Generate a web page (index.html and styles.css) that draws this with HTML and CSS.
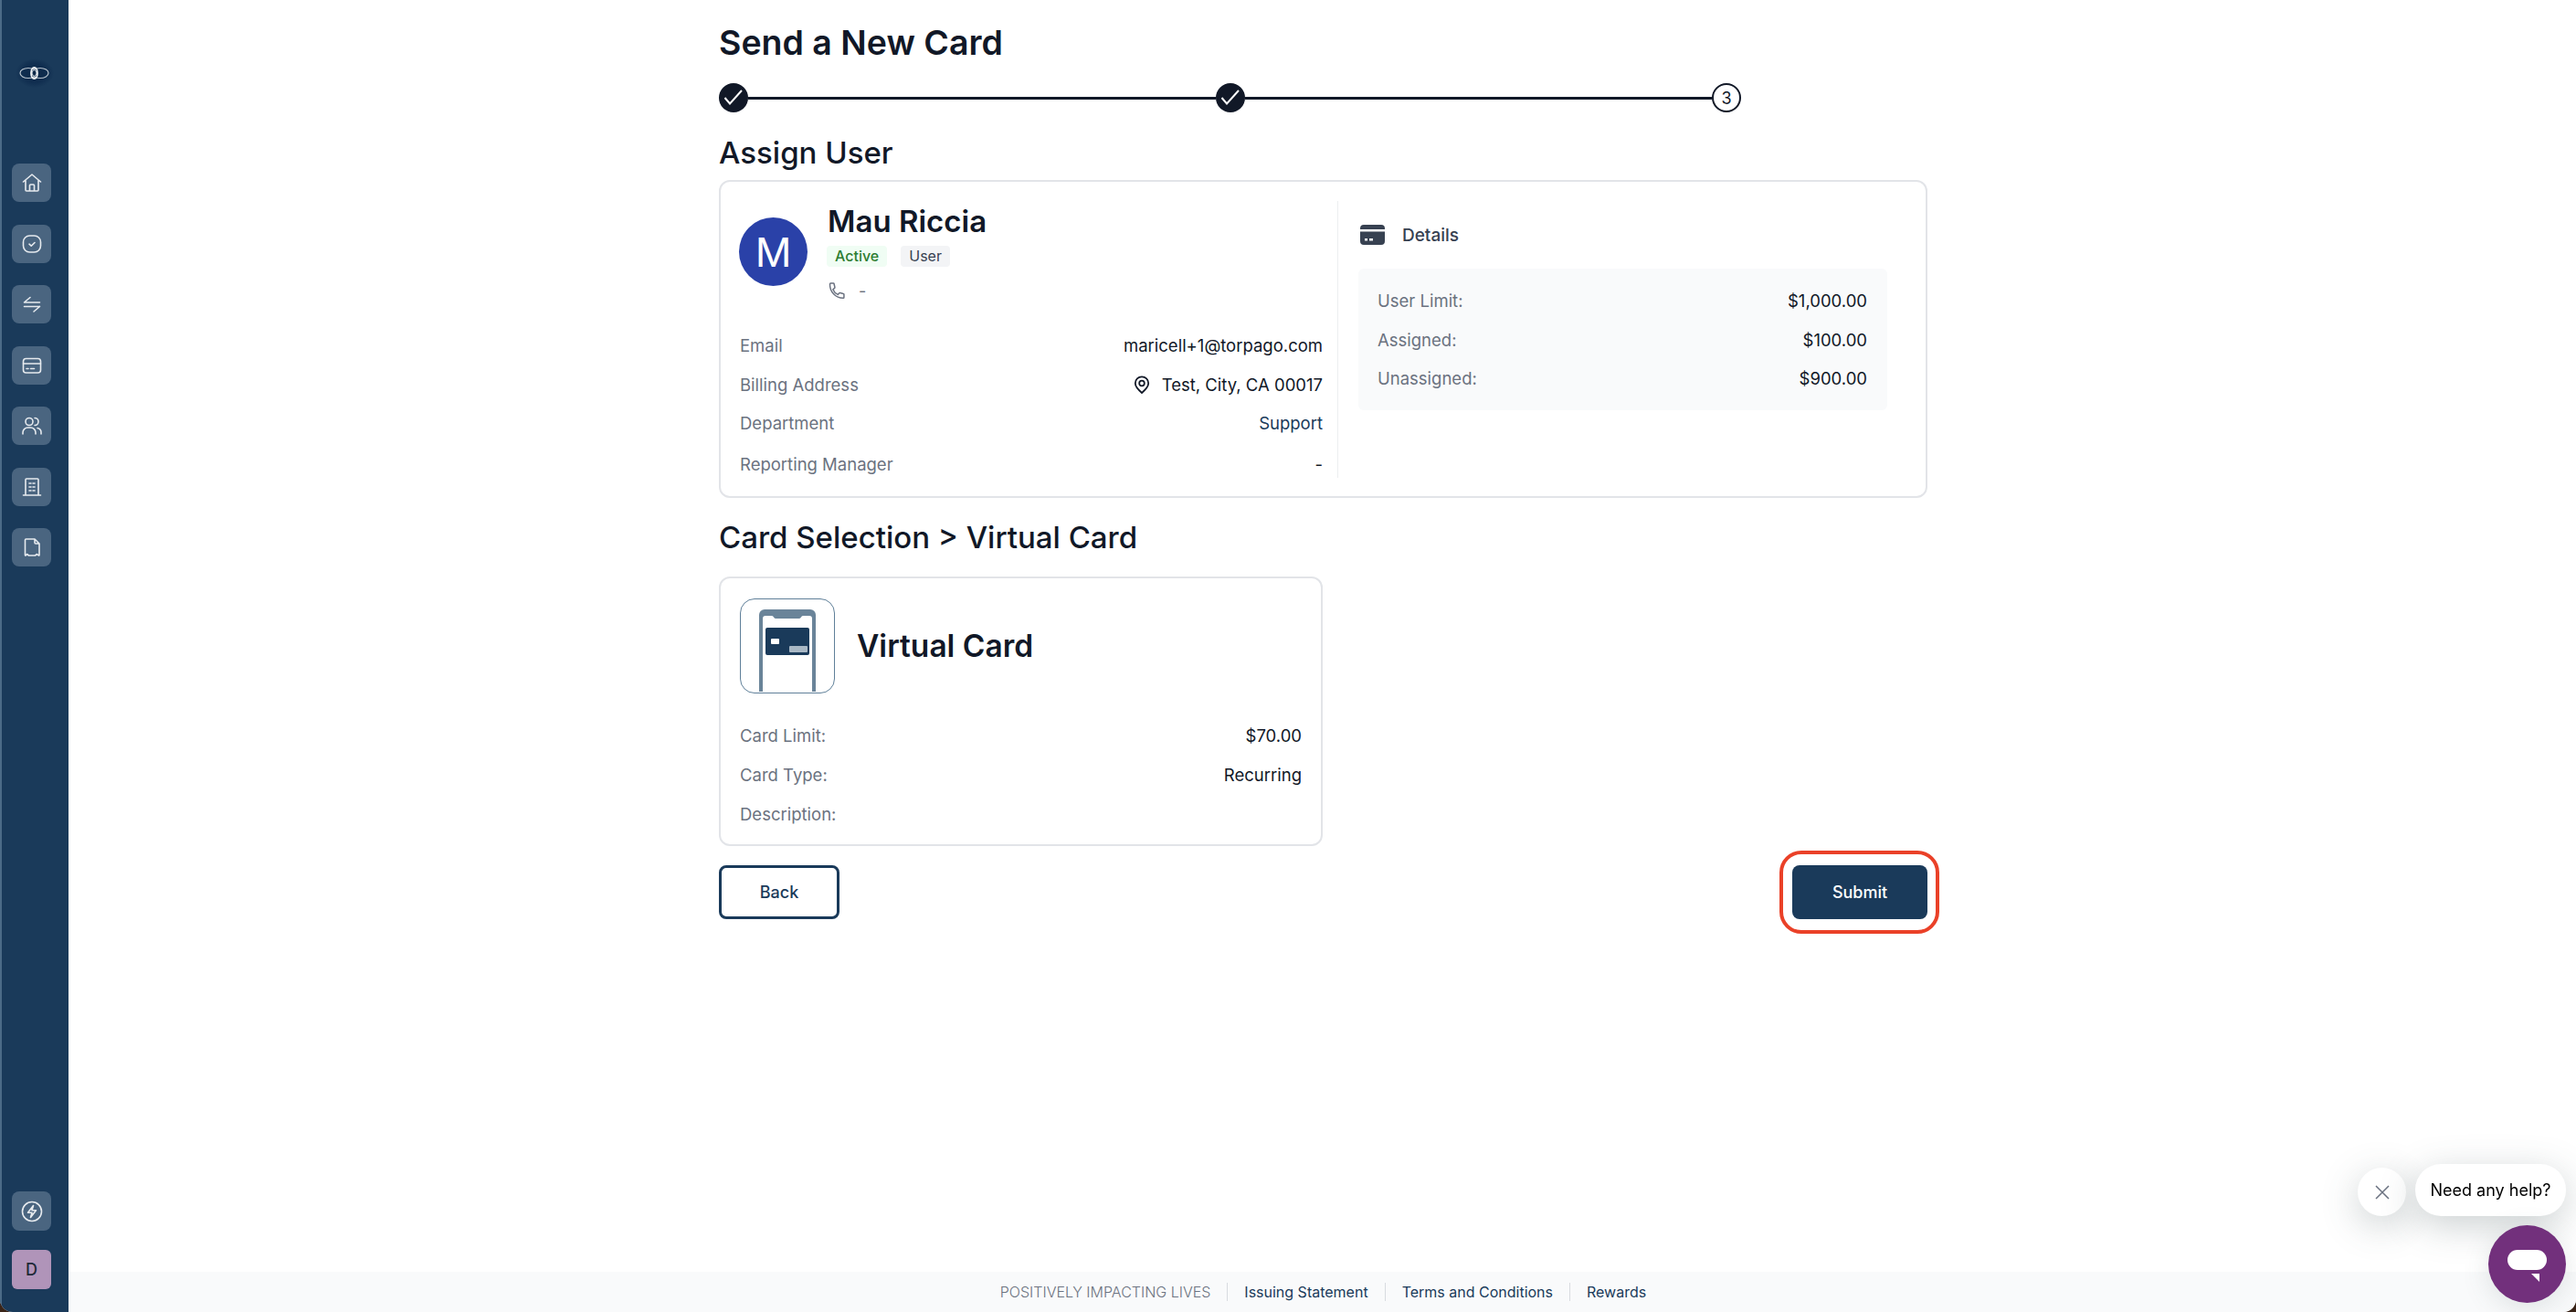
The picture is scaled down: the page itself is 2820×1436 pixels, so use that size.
FILE: index.html
```html
<!DOCTYPE html>
<html lang="en">
<head>
    <meta charset="UTF-8">
    <meta name="viewport" content="width=device-width, initial-scale=1.0">
    <title>Send a New Card</title>
    <link rel="stylesheet" href="styles.css">
</head>
<body>
    <div class="app">
        <aside class="sidebar">
            <svg class="logo" width="44" height="36" viewBox="0 0 44 36">
                <defs>
                    <radialGradient id="logoGlow">
                        <stop offset="0" stop-color="#0c2747"/>
                        <stop offset="0.65" stop-color="#102e50"/>
                        <stop offset="1" stop-color="#1a3a5a"/>
                    </radialGradient>
                </defs>
                <ellipse cx="22" cy="18" rx="21" ry="16" fill="url(#logoGlow)"/>
                <ellipse cx="15" cy="18" rx="9" ry="5.500" fill="none" stroke="#b8c3cd" stroke-width="1.200"/>
                <ellipse cx="28" cy="18" rx="9" ry="5.500" fill="none" stroke="#b8c3cd" stroke-width="1.200"/>
                <ellipse cx="21.500" cy="18" rx="3.500" ry="6" fill="none" stroke="#eef1f3" stroke-width="1.800"/>
            </svg>

            <nav class="nav">
                <a class="nav-item"><svg class="nav-icon" viewBox="0 0 24 24"><path d="M2.500 11 12 3l9.500 8M5 9.500V20a1 1 0 0 0 1 1h12a1 1 0 0 0 1-1V9.500M9.500 21v-6a1 1 0 0 1 1-1h3a1 1 0 0 1 1 1v6"/></svg></a>
                <a class="nav-item"><svg class="nav-icon" viewBox="0 0 24 24"><rect x="2.500" y="3" width="19" height="18" rx="7"/><path d="M9 12.200l2.200 2 3.800-3.700"/></svg></a>
                <a class="nav-item"><svg class="nav-icon" viewBox="0 0 24 24"><path d="M3.500 10h17M3.500 10l6.500-5.500M20.500 14.500h-17M20.500 14.500 14 20"/></svg></a>
                <a class="nav-item"><svg class="nav-icon" viewBox="0 0 24 24"><rect x="2.500" y="4.500" width="19" height="15.500" rx="3"/><path d="M2.500 10h19M6 15.500h2M10.500 15.500h4"/></svg></a>
                <a class="nav-item"><svg class="nav-icon" viewBox="0 0 24 24"><circle cx="9" cy="7.500" r="4"/><path d="M2 21v-1.500a5.500 5.500 0 0 1 5.500-5.500h3a5.500 5.500 0 0 1 5.500 5.500V21M15 3.500a4 4 0 0 1 0 8M18 14.500a5 5 0 0 1 4 5V21"/></svg></a>
                <a class="nav-item"><svg class="nav-icon" viewBox="0 0 24 24"><path d="M2.500 21h19M5 21V4a1 1 0 0 1 1-1h12a1 1 0 0 1 1 1v17M9 8h2M13 8h2M9 12h2M13 12h2M9 16h2M13 16h2"/></svg></a>
                <a class="nav-item"><svg class="nav-icon" viewBox="0 0 24 24"><path d="M4.500 4a1 1 0 0 1 1-1H15l5 5v12.500a.5.5 0 0 1-.8.4L17.500 19.500l-2 1.500h-7l-2-1.500-1.200 1.400a.5.5 0 0 1-.8-.4zM15 3v4a1 1 0 0 0 1 1h4"/></svg></a>
            </nav>

            <div class="side-bottom">
                <a class="nav-item nav-bolt"><svg class="nav-icon" viewBox="0 0 24 24"><circle cx="12" cy="12" r="10.500"/><path d="M13.500 5.500 7.500 13.200H12l-1.500 5.300 6-7.700H12z"/></svg></a>
                <div class="user-tile">D</div>
            </div>
        </aside>

        <div class="main">
            <main class="content">
                <h1>Send a New Card</h1>

                <div class="stepper">
                    <span class="step step-done"><svg width="32" height="32" viewBox="0 0 32 32"><path d="M6.500 16l5.500 6.500L25 8"/></svg></span>
                    <span class="step-line"></span>
                    <span class="step step-done"><svg width="32" height="32" viewBox="0 0 32 32"><path d="M6.500 16l5.500 6.500L25 8"/></svg></span>
                    <span class="step-line"></span>
                    <span class="step step-current">3</span>
                </div>

                <h2 class="section-title">Assign User</h2>
                <section class="card user-card">
                    <div class="user-col">
                        <div class="user-head">
                            <div class="avatar">M</div>
                            <div class="user-meta">
                                <div class="user-name">Mau Riccia</div>
                                <div class="badges">
                                    <span class="badge badge-green">Active</span>
                                    <span class="badge badge-gray">User</span>
                                </div>
                                <div class="phone">
                                    <svg width="20" height="20" viewBox="0 0 24 24" fill="none" stroke="#6b7280" stroke-width="1.800" stroke-linecap="round" stroke-linejoin="round"><path d="M4 2.500h3.500a1 1 0 0 1 1 .8l1 4.500a1 1 0 0 1-.4 1L7 10.500c1.200 3 3.500 5.500 6.500 6.800l1.800-2a1 1 0 0 1 1-.3l4.400 1.200a1 1 0 0 1 .8 1V21a1 1 0 0 1-1 1C10.500 22 2.800 13.500 3 3.500a1 1 0 0 1 1-1z"/></svg>
                                    <span>-</span>
                                </div>
                            </div>
                        </div>
                        <div class="row row-first"><span class="label">Email</span><span class="value">maricell+1@torpago.com</span></div>
                        <div class="row"><span class="label">Billing Address</span><span class="value value-addr"><svg width="18" height="20" viewBox="0 0 18 20" fill="none" stroke="#111827" stroke-width="1.800"><path d="M9 19C5 15.500 1.800 12.500 1.800 8.500a7.200 7.200 0 0 1 14.400 0C16.200 12.500 13 15.500 9 19z"/><circle cx="9" cy="8.500" r="2.800"/></svg>Test, City, CA 00017</span></div>
                        <div class="row"><span class="label">Department</span><span class="value value-link">Support</span></div>
                        <div class="row row-last"><span class="label">Reporting Manager</span><span class="value">-</span></div>
                    </div>

                    <div class="details-col">
                        <div class="details-head">
                            <svg width="27" height="22" viewBox="0 0 27 22"><path fill="#374151" d="M4 0h19a4 4 0 0 1 4 4v1H0V4a4 4 0 0 1 4-4zM0 7.500h27V18a4 4 0 0 1-4 4H4a4 4 0 0 1-4-4z"/><rect x="5" y="15" width="3" height="2.500" fill="#fff"/><rect x="10" y="15" width="4" height="2.500" fill="#fff"/></svg>
                            <span>Details</span>
                        </div>
                        <div class="details-panel">
                            <div class="row"><span class="label">User Limit:</span><span class="value">$1,000.00</span></div>
                            <div class="row"><span class="label">Assigned:</span><span class="value">$100.00</span></div>
                            <div class="row"><span class="label">Unassigned:</span><span class="value">$900.00</span></div>
                        </div>
                    </div>
                </section>

                <h2 class="section-title section-two">Card Selection &gt; Virtual Card</h2>
                <section class="card virtual-card">
                    <div class="virtual-head">
                        <div class="phone-thumb">
                            <svg width="101" height="101" viewBox="0 0 101 101">
                                <path fill="#6a8499" d="M20 101V17a6 6 0 0 1 6-6h50a6 6 0 0 1 6 6v84z"/>
                                <path fill="#fff" d="M24 101V21a3 3 0 0 1 3-3h7c2 0 2 3 4 3h26c2 0 2-3 4-3h7a3 3 0 0 1 3 3v80z"/>
                                <rect x="27" y="31" width="48" height="30" rx="2" fill="#1a3a5a"/>
                                <rect x="33" y="43" width="9" height="6" rx="1" fill="#fff"/>
                                <rect x="53" y="51" width="20" height="7" rx="1" fill="#a9b8c5"/>
                            </svg>
                        </div>
                        <div class="virtual-title">Virtual Card</div>
                    </div>
                    <div class="row row-first"><span class="label">Card Limit:</span><span class="value">$70.00</span></div>
                    <div class="row"><span class="label">Card Type:</span><span class="value">Recurring</span></div>
                    <div class="row"><span class="label">Description:</span><span class="value"></span></div>
                </section>

                <div class="actions">
                    <button class="btn btn-outline">Back</button>
                    <button class="btn btn-solid">Submit</button>
                    <span class="highlight"></span>
                </div>
            </main>

            <footer class="footer">
                <span class="footer-tag">POSITIVELY IMPACTING LIVES</span>
                <span class="footer-sep"></span>
                <a>Issuing Statement</a>
                <span class="footer-sep"></span>
                <a>Terms and Conditions</a>
                <span class="footer-sep"></span>
                <a>Rewards</a>
            </footer>
        </div>

        <div class="chat">
            <div class="chat-top">
                <span class="chat-close"><svg width="18" height="18" viewBox="0 0 18 18" fill="none" stroke="#6b7280" stroke-width="1.500"><path d="M2 2l14 14M16 2 2 16"/></svg></span>
                <span class="chat-bubble">Need any help?</span>
            </div>
            <div class="chat-btn">
                <svg width="44" height="36" viewBox="0 0 44 36"><rect x="0" y="0" width="43" height="22" rx="11" fill="#fff"/><path fill="#fff" d="M26 26h9v9z"/></svg>
            </div>
        </div>
    </div>
</body>
</html>
```

FILE: styles.css
```css
* {
    margin: 0;
    padding: 0;
    box-sizing: border-box;
}

html, body {
    height: 100%;
}

body {
    background: #3a2418;
    font-family: Inter, "Liberation Sans", sans-serif;
    color: #111827;
    overflow: hidden;
}

.app {
    display: flex;
    height: 100vh;
    background: #fff;
    border-radius: 0 0 14px 14px;
    overflow: hidden;
    position: relative;
}

/* sidebar */
.sidebar {
    width: 75px;
    flex-shrink: 0;
    background: #1a3a5a;
    border-left: 2px solid #4c6b87;
    display: flex;
    flex-direction: column;
    align-items: flex-start;
}

.logo {
    margin: 62px 0 0 14px;
}

.nav {
    display: flex;
    flex-direction: column;
    gap: 24.500px;
    margin: 81px 0 0 11px;
}

.nav-item {
    width: 43px;
    height: 42px;
    border-radius: 8px;
    background: #4a6580;
    display: flex;
    align-items: center;
    justify-content: center;
}

.nav-icon {
    width: 24px;
    height: 24px;
    fill: none;
    stroke: #e6eaee;
    stroke-width: 1.600;
    stroke-linecap: round;
    stroke-linejoin: round;
}

.side-bottom {
    margin: auto 0 25px 11px;
    display: flex;
    flex-direction: column;
    gap: 21px;
}

.nav-bolt {
    height: 43px;
}

.user-tile {
    width: 43px;
    height: 43px;
    border-radius: 6px;
    background: #b094b9;
    color: #1f2937;
    font-size: 18px;
    font-weight: 500;
    display: flex;
    align-items: center;
    justify-content: center;
}

/* main column */
.main {
    flex: 1;
    display: flex;
    flex-direction: column;
    min-width: 0;
}

.content {
    flex: 1;
    width: 1323px;
    margin-left: 712px;
    padding-top: 22px;
}

h1 {
    font-size: 37.500px;
    line-height: 50px;
    font-weight: 600;
}

.stepper {
    display: flex;
    align-items: center;
    width: 1119px;
    margin-top: 19px;
}

.step {
    width: 32px;
    height: 32px;
    border-radius: 50%;
    flex-shrink: 0;
    display: flex;
    align-items: center;
    justify-content: center;
}

.step-done {
    background: #111827;
}

.step-done path {
    fill: none;
    stroke: #fff;
    stroke-width: 2;
}

.step-current {
    border: 2px solid #111827;
    font-size: 18px;
}

.step-line {
    flex: 1;
    height: 3px;
    background: #111827;
}

.section-title {
    font-size: 33px;
    line-height: 40px;
    font-weight: 500;
    margin-top: 24px;
}

.section-two {
    margin-top: 23px;
}

.card {
    border: 2px solid #e2e4e8;
    border-radius: 12px;
    margin-top: 10px;
}

.user-card {
    display: flex;
    height: 348px;
}

.user-col {
    width: 676px;
    height: 303px;
    margin-top: 21px;
    padding: 2px 16px 0 21px;
    border-right: 1px solid #eceef0;
}

.user-head {
    display: flex;
    align-items: center;
    gap: 22px;
}

.avatar {
    width: 75px;
    height: 75px;
    border-radius: 50%;
    background: #2a41a8;
    color: #fff;
    font-size: 44px;
    display: flex;
    align-items: center;
    justify-content: center;
    margin-left: -1px;
}

.user-name {
    font-size: 33px;
    line-height: 40px;
    font-weight: 600;
}

.badges {
    display: flex;
    gap: 15px;
    margin: 7px 0 0 -1px;
}

.badge {
    font-size: 16px;
    line-height: 23px;
    padding: 0 9px;
    border-radius: 4px;
    height: 23px;
}

.badge-green {
    background: #f0fdf4;
    color: #2e7d32;
    font-weight: 500;
}

.badge-gray {
    background: #f3f4f6;
    color: #374151;
}

.phone {
    display: flex;
    align-items: center;
    gap: 14px;
    margin-top: 15px;
    height: 22px;
    color: #6b7280;
    font-size: 18px;
}

.row {
    display: flex;
    justify-content: space-between;
    align-items: center;
    height: 24px;
    margin-top: 18.500px;
    font-size: 18.500px;
}

.label {
    color: #6b7280;
}

.value-addr {
    display: flex;
    align-items: center;
    gap: 13px;
}

.value-link {
    color: #1a3a5a;
}

.row-first {
    margin-top: 37px;
}

.row-last {
    margin-top: 21px;
}

.details-col {
    flex: 1;
    padding: 46px 42px 0 22px;
}

.details-head {
    display: flex;
    align-items: center;
    gap: 19px;
    height: 24px;
    padding-left: 2px;
    font-size: 19px;
    font-weight: 500;
    color: #374151;
}

.details-panel {
    margin-top: 25px;
    padding: 23px 22px 23px 21px;
    background: #f9fafb;
    border-radius: 6px;
    height: 155px;
}

.details-panel .row:first-child {
    margin-top: 0;
}

.virtual-card {
    width: 661px;
    margin-top: 23px;
    padding: 22px 21px 21px;
}

.virtual-head {
    display: flex;
    align-items: center;
    gap: 24px;
}

.phone-thumb {
    width: 104px;
    height: 104px;
    border: 1.500px solid #5f7f99;
    border-radius: 16px;
    overflow: hidden;
}

.phone-thumb svg {
    display: block;
}

.virtual-title {
    font-size: 33.500px;
    line-height: 40px;
    font-weight: 600;
}

.virtual-card .row {
    margin-top: 19px;
}

.virtual-card .row-first {
    margin-top: 34px;
}

.actions {
    position: relative;
    display: flex;
    justify-content: space-between;
    margin-top: 21px;
}

.btn {
    height: 59px;
    border-radius: 8px;
    font-family: inherit;
    font-size: 18px;
    font-weight: 500;
}

.btn-outline {
    width: 132px;
    background: #fff;
    border: 3px solid #1a3a5a;
    color: #1a3a5a;
}

.btn-solid {
    width: 148px;
    background: #1a3a5a;
    border: 0;
    color: #fff;
}

/* red marker drawn over the screenshot */
.highlight {
    position: absolute;
    right: -13px;
    top: -16px;
    width: 175px;
    height: 91px;
    border: 4px solid #ea4128;
    border-radius: 24px;
}

.footer {
    height: 44px;
    background: #f9fafb;
    display: flex;
    align-items: center;
    justify-content: center;
    gap: 18px;
    padding-left: 2px;
    font-size: 16px;
    color: #1a3a5a;
}

.footer-tag {
    color: #6b7280;
    font-weight: 300;
}

.footer-sep {
    width: 1px;
    height: 20px;
    background: #d8dbe0;
}

/* chat widget */
.chat {
    position: fixed;
    right: 11px;
    bottom: 10px;
    display: flex;
    flex-direction: column;
    align-items: flex-end;
    gap: 10px;
}

.chat-top {
    display: flex;
    align-items: flex-end;
    gap: 10px;
}

.chat-close {
    width: 53px;
    height: 53px;
    border-radius: 50%;
    background: #fff;
    display: flex;
    align-items: center;
    justify-content: center;
    box-shadow: 0 10px 40px rgba(70, 85, 90, 0.28);
}

.chat-bubble {
    width: 165px;
    height: 57px;
    border-radius: 28px;
    background: #fff;
    color: #000;
    font-size: 18px;
    display: flex;
    align-items: center;
    justify-content: center;
    box-shadow: 0 10px 40px rgba(70, 85, 90, 0.28);
}

.chat-btn {
    width: 85px;
    height: 85px;
    border-radius: 50%;
    background: #72307c;
    display: flex;
    align-items: center;
    justify-content: center;
    padding-top: 5px;
    box-shadow: 0 6px 30px rgba(70, 85, 90, 0.15);
}
```
